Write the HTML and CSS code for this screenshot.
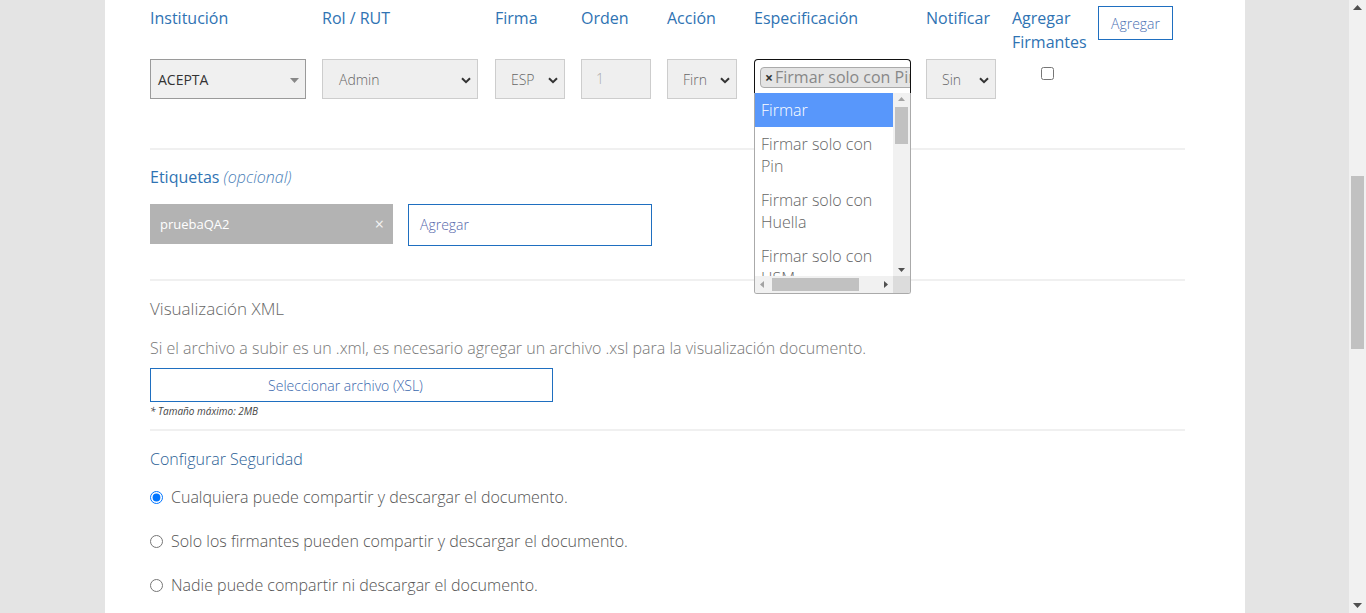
FILE: index.html
```html
<!DOCTYPE html>
<html lang="es">
<head>
<meta charset="utf-8">
<title>Firmantes</title>
<link rel="stylesheet" href="styles.css">
</head>
<body>
<div class="viewport">
  <div class="panel">
    <div class="signers">
      <div class="col c-inst"><div class="lbl">Institución</div>
        <div class="sel sel-inst"><span>ACEPTA</span>
          <svg class="tri" width="9" height="5" viewBox="0 0 9 5"><path d="M0 0h9L4.5 5z" fill="#888"/></svg>
        </div>
      </div>
      <div class="col c-rol"><div class="lbl">Rol / RUT</div>
        <div class="sel sel-w156"><span class="val">Admin</span>
          <svg class="chev" width="10" height="7" viewBox="0 0 10 7"><path d="M1 1.2l4 4 4-4" fill="none" stroke="#333" stroke-width="2"/></svg>
        </div>
      </div>
      <div class="col"><div class="lbl">Firma</div>
        <div class="sel sel-w70"><span class="val">ESP</span>
          <svg class="chev" width="10" height="7" viewBox="0 0 10 7"><path d="M1 1.2l4 4 4-4" fill="none" stroke="#333" stroke-width="2"/></svg>
        </div>
      </div>
      <div class="col"><div class="lbl">Orden</div>
        <div class="inp-order">1</div>
      </div>
      <div class="col"><div class="lbl">Acción</div>
        <div class="sel sel-w70"><span class="val">Firn</span>
          <svg class="chev" width="10" height="7" viewBox="0 0 10 7"><path d="M1 1.2l4 4 4-4" fill="none" stroke="#333" stroke-width="2"/></svg>
        </div>
      </div>
      <div class="col c-spec"><div class="lbl">Especificación</div>
        <div class="multi">
          <div class="chip"><span class="chip-x">×</span>Firmar solo con Pin</div>
        </div>
        <div class="dropdown">
          <div class="dd-body">
            <ul class="dd-list">
              <li class="on">Firmar</li>
              <li>Firmar solo con Pin</li>
              <li>Firmar solo con Huella</li>
              <li>Firmar solo con HSM</li>
            </ul>
            <div class="vscroll">
              <svg class="arr" width="7" height="4" viewBox="0 0 7 4"><path d="M0 4L3.5 0 7 4z" fill="#a3a3a3"/></svg>
              <div class="vthumb"></div>
              <div class="spacer"></div>
              <svg class="arr" width="7" height="4" viewBox="0 0 7 4"><path d="M0 0h7L3.5 4z" fill="#505050"/></svg>
            </div>
          </div>
          <div class="hscroll">
            <svg class="harr" width="4" height="7" viewBox="0 0 4 7"><path d="M4 0v7L0 3.5z" fill="#a3a3a3"/></svg>
            <div class="hthumb"></div>
            <div class="spacer"></div>
            <svg class="harr" width="4" height="7" viewBox="0 0 4 7"><path d="M0 0v7L4 3.5z" fill="#505050"/></svg>
            <div class="corner"></div>
          </div>
        </div>
      </div>
      <div class="col"><div class="lbl">Notificar</div>
        <div class="sel sel-w70"><span class="val">Sin</span>
          <svg class="chev" width="10" height="7" viewBox="0 0 10 7"><path d="M1 1.2l4 4 4-4" fill="none" stroke="#333" stroke-width="2"/></svg>
        </div>
      </div>
      <div class="col"><div class="lbl">Agregar Firmantes</div>
        <div class="chk-wrap"><input type="checkbox" class="chk"></div>
      </div>
      <div class="col"><button class="btn-add">Agregar</button></div>
    </div>

    <hr class="div div1">

    <div class="lbl">Etiquetas <em>(opcional)</em></div>
    <div class="tags">
      <div class="tag"><span>pruebaQA2</span><span class="tag-x">×</span></div>
      <div class="tag-input">Agregar</div>
    </div>

    <hr class="div div2">

    <div class="sub-title">Visualización XML</div>
    <p class="desc">Si el archivo a subir es un .xml, es necesario agregar un archivo .xsl para la visualización documento.</p>
    <button class="btn-file">Seleccionar archivo (XSL)</button>
    <div class="note">* Tamaño máximo: 2MB</div>

    <hr class="div div3">

    <div class="lbl sec">Configurar Seguridad</div>
    <label class="radio"><input type="radio" name="sec" checked><span>Cualquiera puede compartir y descargar el documento.</span></label>
    <label class="radio"><input type="radio" name="sec"><span>Solo los firmantes pueden compartir y descargar el documento.</span></label>
    <label class="radio"><input type="radio" name="sec"><span>Nadie puede compartir ni descargar el documento.</span></label>
  </div>
</div>
<div class="pscroll">
  <svg class="parr" width="9" height="5" viewBox="0 0 9 5"><path d="M0 5L4.5 0 9 5z" fill="#505050"/></svg>
  <div class="ptrack"><div class="pthumb"></div></div>
  <svg class="parr" width="9" height="5" viewBox="0 0 9 5"><path d="M0 0h9L4.5 5z" fill="#505050"/></svg>
</div>
</body>
</html>
```

FILE: styles.css
```css
* { box-sizing: border-box; }
html, body { margin: 0; padding: 0; height: 613px; overflow: hidden; }
body {
  display: flex;
  background: #e4e4e4;
  font-family: "Open Sans", "Liberation Sans", sans-serif;
  color: #666;
}
.viewport { flex: 1; height: 613px; overflow: hidden; }
.panel {
  margin-left: 105px;
  width: 1140px;
  min-height: 613px;
  background: #fff;
  padding: 6px 60px 0 45px;
}
.signers {
  display: grid;
  grid-template-columns: 172px 173px 86px 86px 87px 172px 86px 86px auto;
  grid-auto-rows: auto;
}
.col { position: relative; }
.lbl {
  font-size: 16px;
  line-height: 24px;
  color: #2f73b3;
  font-weight: 400;
}
.signers .lbl { height: 53px; }
.lbl em { font-style: italic; color: #4a80b8; font-weight: 300; }
.sel {
  height: 40px;
  background: #efefef;
  border: 1px solid #cdcdcd;
  display: flex;
  align-items: center;
  font-size: 14px;
  color: #666;
  font-weight: 300;
  position: relative;
}
.sel-inst { width: 156px; border-color: #9a9a9a; background: #f0f0f0; color: #333; font-weight: 400; padding-left: 7px; }
.sel-inst .tri { position: absolute; right: 6px; top: 18px; }
.sel-w156 { width: 156px; padding-left: 16px; }
.sel-w70 { width: 70px; padding-left: 15px; overflow: hidden; }
.sel .chev { position: absolute; right: 6px; top: 17px; }
.sel .val { white-space: nowrap; }
.inp-order {
  width: 70px; height: 40px;
  background: #efefef; border: 1px solid #cdcdcd;
  font-size: 14px; color: #aaa;
  font-weight: 300;
  padding: 9px 0 0 14px;
}
.multi {
  width: 157px; height: 34px;
  border: 1px solid #111;
  border-bottom: none;
  border-radius: 4px 4px 0 0;
  background: #fff;
  padding: 7px 0 0 5px;
  overflow: hidden;
}
.chip {
  height: 21px;
  background: #e4e4e4;
  border: 1px solid #aaa;
  border-radius: 4px;
  font-size: 16px;
  line-height: 19px;
  color: #888;
  white-space: nowrap;
  padding-left: 4px;
  width: 170px;
}
.chip-x { color: #333; font-weight: 700; font-size: 14px; margin-right: 2px; }
.dropdown {
  position: absolute;
  left: 0; top: 87px;
  width: 157px; height: 201px;
  border: 1px solid #aaa;
  border-top: none;
  border-radius: 0 0 3px 3px;
  background: #fff;
  z-index: 5;
  display: flex;
  flex-direction: column;
  overflow: hidden;
}
.dd-body { display: flex; flex: 1; overflow: hidden; }
.dd-list {
  list-style: none; margin: 0; padding: 0;
  width: 139px;
  font-size: 16px; line-height: 22px; color: #666;
  font-weight: 300;
}
.dd-list li { padding: 6px 6px 6px 6px; }
.dd-list li.on { background: #5897fb; color: #fff; }
.vscroll {
  width: 17px; background: #f1f1f1;
  display: flex; flex-direction: column; align-items: center;
  padding: 4px 0 4px;
}
.vthumb { width: 13px; height: 37px; background: #c1c1c1; margin-top: 6px; }
.spacer { flex: 1; }
.hscroll {
  height: 17px; background: #f1f1f1;
  display: flex; align-items: center; padding-left: 5px;
}
.hthumb { width: 87px; height: 13px; background: #c1c1c1; margin-left: 8px; }
.harr { flex: none; }
.corner { width: 17px; height: 17px; background: #dcdcdc; margin-left: 5px; }
.chk-wrap { padding: 8px 0 0 29px; }
.chk { display: block; margin: 0; width: 13px; height: 13px; }
.btn-add {
  margin-top: 0;
  width: 75px; height: 34px;
  background: #fff;
  border: 1px solid #1f6fc0;
  color: #4a6fb3;
  font-family: inherit;
  font-size: 14px;
  font-weight: 300;
  padding: 0;
}
.div { border: none; height: 2px; background: #f0f0f0; margin: 0; }
.div1 { margin-top: 49px; }
.div2 { margin-top: 33px; }
.div3 { margin-top: 11px; }
.div1 + .lbl { margin-top: 15px; }
.tags { display: flex; gap: 15px; margin-top: 15px; }
.tag {
  width: 243px; height: 40px;
  background: #b3b3b3;
  color: #fff;
  font-size: 13px;
  display: flex; align-items: center; justify-content: space-between;
  padding: 0 9px 0 10px;
}
.tag-x { font-size: 16px; color: #f4f4f4; }
.tag-input {
  width: 244px; height: 42px;
  border: 1px solid #1f6fc0;
  font-size: 14px; color: #5566aa;
  font-weight: 300;
  padding: 10px 0 0 11px;
}
.sub-title {
  margin-top: 16px;
  font-size: 17px; line-height: 24px;
  color: #666;
  font-weight: 300;
}
.desc {
  margin: 15px 0 0;
  font-size: 16px; line-height: 24px;
  color: #777;
  font-weight: 300;
}
.btn-file {
  display: block;
  margin-top: 8px;
  width: 403px; height: 34px;
  background: #fff;
  border: 1px solid #1f6fc0;
  color: #3a68ad;
  font-family: inherit;
  font-size: 14px;
  font-weight: 300;
  padding: 0 12px 0 0;
}
.note {
  font-size: 10px; font-style: italic; color: #444;
  margin-top: 2px; line-height: 14px;
}
.sec { margin-top: 16px; color: #2c5f96; font-weight: 300; }
.radio {
  display: flex; align-items: center;
  font-size: 16px; color: #555;
  font-weight: 300;
  height: 24px;
  margin-top: 20px;
}
.radio:first-of-type { margin-top: 14px; }
.radio input { margin: 0 8px 0 0; width: 13px; height: 13px; }
.pscroll {
  width: 17px; height: 613px;
  background: #f1f1f1;
  display: flex; flex-direction: column; align-items: center;
  padding: 5px 0;
}
.parr { flex: none; }
.ptrack { flex: 1; width: 100%; }
.pthumb { width: 13px; height: 173px; background: #c1c1c1; margin: 166px auto 0; }
```
